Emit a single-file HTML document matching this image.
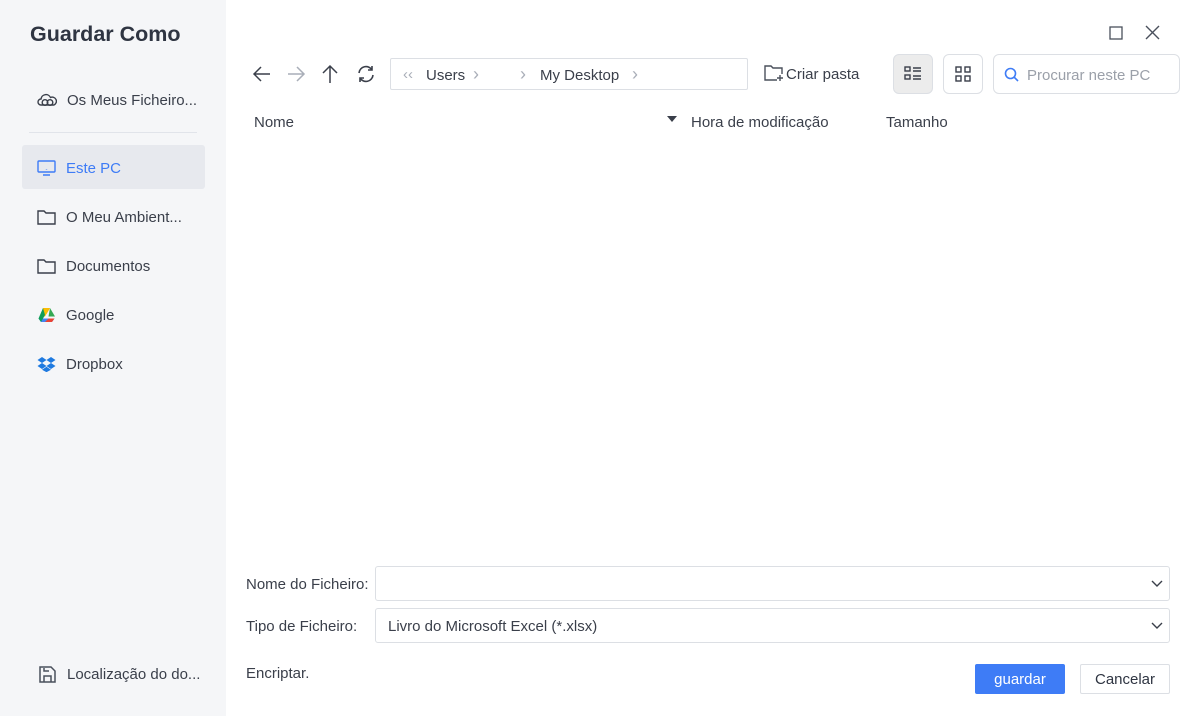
<!DOCTYPE html>
<html><head><meta charset="utf-8"><style>
*{box-sizing:border-box;margin:0;padding:0}
body{width:1197px;height:716px;position:relative;background:#fff;font-family:"Liberation Sans",sans-serif;color:#3a3f4a;font-size:15px;overflow:hidden}
.side{position:absolute;left:0;top:0;width:226px;height:716px;background:#f5f6f8}
.abs{position:absolute}
.title{left:30px;top:22px;font-size:21.5px;font-weight:bold;color:#2f3542}
.item{position:absolute;left:22px;width:183px;height:44px;display:flex;align-items:center;padding-left:15px;padding-top:2px;font-size:15px;color:#3a3f4a;white-space:nowrap}
.item svg{margin-right:10px}
.sel{background:#e7e9ee;border-radius:3px;color:#3e7cf6}
.t{position:absolute;font-size:15px;color:#3a3f4a;white-space:nowrap}
.box{position:absolute;border:1px solid #dcdfe4;border-radius:3px;background:#fff}
</style></head><body>
<div class="side">
<div class="abs title">Guardar Como</div>
<div class="item" style="top:77px"><svg width="20" height="16" viewBox="0 0 20 16" fill="none" stroke="#3a3f4a" stroke-width="1.4"><path d="M4 13a3 3 0 0 1 0-6 5 5 0 0 1 9.5-1.5A3.5 3.5 0 0 1 17 13z"/><circle cx="8" cy="10.5" r="2.8"/><circle cx="13" cy="10.5" r="2.8"/></svg>Os Meus Ficheiro...</div>
<div class="abs" style="left:29px;top:132px;width:168px;height:1px;background:#e1e4ea"></div>
<div class="item sel" style="top:145px"><svg width="19" height="16" viewBox="0 0 19 16" fill="none" stroke="#3e7cf6" stroke-width="1.4"><rect x="1" y="1" width="17" height="11" rx="1"/><path d="M6 15h7M9.5 9.5v0.5"/></svg>Este PC</div>
<div class="item" style="top:194px"><svg width="19" height="16" viewBox="0 0 19 16" fill="none" stroke="#3a3f4a" stroke-width="1.4"><path d="M1 2h6l2 2h9v11H1z"/></svg>O Meu Ambient...</div>
<div class="item" style="top:243px"><svg width="19" height="16" viewBox="0 0 19 16" fill="none" stroke="#3a3f4a" stroke-width="1.4"><path d="M1 2h6l2 2h9v11H1z"/></svg>Documentos</div>
<div class="item" style="top:292px"><svg width="19" height="16" viewBox="0 0 19 16"><path d="M6 1h7l-5 8.5H4.5z" fill="#fbbc04"/><path d="M13 1l5 8.5h-6.5z" fill="#34a853"/><path d="M1.5 11.5L4 15h11l2.5-3.5z" fill="#4285f4"/><path d="M6 1L1.5 11.5 4 15 8 8z" fill="#0f9d58"/><path d="M13 1h-7l3.5 6z" fill="#fbbc04"/><path d="M11.5 11.5h6L15 15h-7z" fill="#ea4335"/></svg>Google</div>
<div class="item" style="top:341px"><svg width="19" height="16" viewBox="0 0 19 16" fill="#1f7ae0"><path d="M5 1l4.5 3L5 7 .5 4zM14 1l4.5 3L14 7 9.5 4zM5 7l4.5 3L5 13 .5 10zM14 7l4.5 3-4.5 3-4.5-3zM5 13.7l4.5-3 4.5 3-4.5 2.5z"/></svg>Dropbox</div>
<div class="item" style="top:651px;left:23px;"><svg width="19" height="19" viewBox="0 0 19 19" fill="none" stroke="#4a505c" stroke-width="1.5"><path d="M2 2h11l4 4v11H2z"/><path d="M6 17v-6h7v6M6 3v3h5"/></svg>Localização do do...</div>
</div>
<svg class="abs" style="left:1109px;top:26px" width="14" height="14" fill="none" stroke="#4a505c" stroke-width="1.3"><rect x="1" y="1" width="12" height="12"/></svg>
<svg class="abs" style="left:1145px;top:25px" width="15" height="15" fill="none" stroke="#4a505c" stroke-width="1.4"><path d="M1 1l13 13M14 1L1 14"/></svg>
<svg class="abs" style="left:252px;top:64px" width="20" height="20" fill="none" stroke="#3a3f4a" stroke-width="1.5"><path d="M18 10H2M9 3l-7 7 7 7"/></svg>
<svg class="abs" style="left:286px;top:64px" width="20" height="20" fill="none" stroke="#a9aeb8" stroke-width="1.5"><path d="M2 10h16M11 3l7 7-7 7"/></svg>
<svg class="abs" style="left:320px;top:64px" width="20" height="20" fill="none" stroke="#3a3f4a" stroke-width="1.5"><path d="M10 19V2M3 9l7-7 7 7"/></svg>
<svg class="abs" style="left:356px;top:64px" width="20" height="20" fill="none" stroke="#3a3f4a" stroke-width="1.6"><path d="M3 9a7 7 0 0 1 13-3M17 11a7 7 0 0 1-13 3M16 2v4h-4M4 18v-4h4"/></svg>
<div class="box" style="left:390px;top:58px;width:358px;height:32px;border-radius:2px"></div>
<div class="t" style="left:403px;top:66px;color:#a9aeb8">‹‹</div>
<div class="t" style="left:426px;top:67px">Users</div>
<div class="t" style="left:473px;top:64px;color:#a9aeb8;font-size:18px">›</div>
<div class="t" style="left:520px;top:64px;color:#a9aeb8;font-size:18px">›</div>
<div class="t" style="left:540px;top:67px">My Desktop</div>
<div class="t" style="left:632px;top:64px;color:#a9aeb8;font-size:18px">›</div>
<svg class="abs" style="left:764px;top:65px" width="20" height="17" fill="none" stroke="#4a505c" stroke-width="1.4"><path d="M13 15H1V1h6l2 2h9v6M16 10v6M13 13h6"/></svg>
<div class="t" style="left:786px;top:66px">Criar pasta</div>
<div class="box" style="left:893px;top:54px;width:40px;height:40px;background:#ececec;border-radius:6px"></div>
<svg class="abs" style="left:904px;top:66px" width="18" height="16" fill="none" stroke="#3a3f4a" stroke-width="1.4"><rect x="1" y="1" width="5" height="4"/><rect x="1" y="9" width="5" height="4"/><path d="M9 2h8M9 5h8M9 10h8M9 13h8"/></svg>
<div class="box" style="left:943px;top:54px;width:40px;height:40px;border-radius:6px"></div>
<svg class="abs" style="left:955px;top:66px" width="16" height="16" fill="none" stroke="#3a3f4a" stroke-width="1.4"><rect x="1" y="1" width="5" height="5"/><rect x="10" y="1" width="5" height="5"/><rect x="1" y="10" width="5" height="5"/><rect x="10" y="10" width="5" height="5"/></svg>
<div class="box" style="left:993px;top:54px;width:187px;height:40px;border-radius:6px"></div>
<svg class="abs" style="left:1004px;top:67px" width="15" height="15" fill="none" stroke="#3e7cf6" stroke-width="1.6"><circle cx="6.5" cy="6.5" r="5"/><path d="M10 10l4 4"/></svg>
<div class="t" style="left:1027px;top:67px;color:#9ba0a9">Procurar neste PC</div>
<div class="t" style="left:254px;top:114px">Nome</div>
<svg class="abs" style="left:667px;top:116px" width="10" height="7"><path d="M0 0h10L5 6z" fill="#3a3f4a"/></svg>
<div class="t" style="left:691px;top:114px">Hora de modificação</div>
<div class="t" style="left:886px;top:114px">Tamanho</div>
<div class="t" style="left:246px;top:576px">Nome do Ficheiro:</div>
<div class="box" style="left:375px;top:566px;width:795px;height:35px"></div>
<svg class="abs" style="left:1151px;top:580px" width="12" height="8" fill="none" stroke="#3a3f4a" stroke-width="1.4"><path d="M1 1l5 5 5-5"/></svg>
<div class="t" style="left:246px;top:618px">Tipo de Ficheiro:</div>
<div class="box" style="left:375px;top:608px;width:795px;height:35px"></div>
<div class="t" style="left:388px;top:618px">Livro do Microsoft Excel (*.xlsx)</div>
<svg class="abs" style="left:1151px;top:622px" width="12" height="8" fill="none" stroke="#3a3f4a" stroke-width="1.4"><path d="M1 1l5 5 5-5"/></svg>
<div class="t" style="left:246px;top:665px">Encriptar.</div>
<div class="abs" style="left:975px;top:664px;width:90px;height:30px;background:#3e7cf6;border-radius:2px;color:#fff;font-size:15px;text-align:center;line-height:31px">guardar</div>
<div class="box" style="left:1080px;top:664px;width:90px;height:30px;border-radius:2px;text-align:center;line-height:30px;font-size:15px;color:#2f3542">Cancelar</div>
</body></html>
